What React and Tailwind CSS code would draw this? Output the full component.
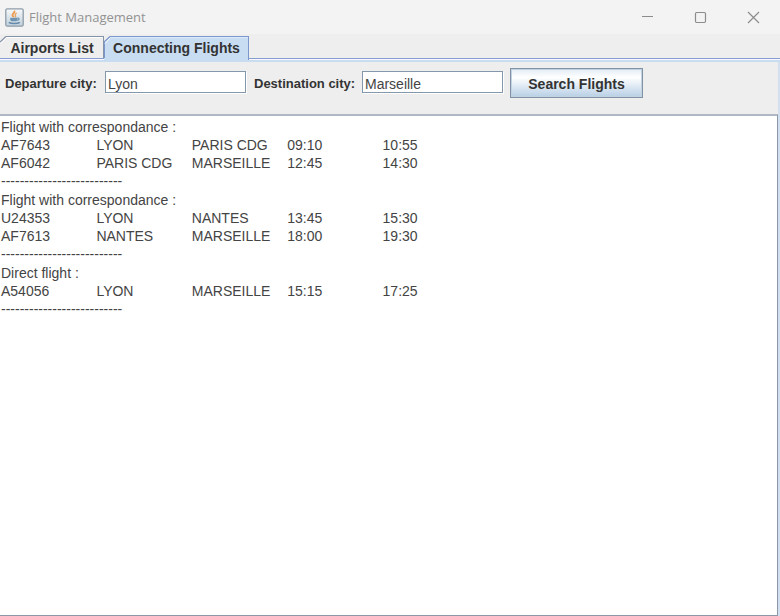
import { Fragment } from "react";

const groups = [
  {
    title: "Flight with correspondance :",
    rows: [
      ["AF7643", "LYON", "PARIS CDG", "09:10", "10:55"],
      ["AF6042", "PARIS CDG", "MARSEILLE", "12:45", "14:30"],
    ],
  },
  {
    title: "Flight with correspondance :",
    rows: [
      ["U24353", "LYON", "NANTES", "13:45", "15:30"],
      ["AF7613", "NANTES", "MARSEILLE", "18:00", "19:30"],
    ],
  },
  {
    title: "Direct flight :",
    rows: [["A54056", "LYON", "MARSEILLE", "15:15", "17:25"]],
  },
];

function JavaIcon() {
  return (
    <svg width="19" height="19" viewBox="0 0 19 19" aria-hidden="true">
      <defs>
        <linearGradient id="plate" x1="0" y1="0" x2="0" y2="1">
          <stop offset="0" stopColor="#f7f9fa" />
          <stop offset="1" stopColor="#bfd0dc" />
        </linearGradient>
      </defs>
      <rect x="0.8" y="0.8" width="17.4" height="17.4" rx="1.5" fill="url(#plate)" stroke="#8f9ca8" strokeWidth="1.3" />
      <path d="M9.2 2.800c1.600 2-2.800 3-1.700 4.700.4.700 1.200.9 1 1.700" fill="none" stroke="#f09a4a" strokeWidth="1.800" />
      <path d="M11.800 5c-1.800.9-2.200 1.700-1.300 2.600.5.600.1 1.200-.3 1.600" fill="none" stroke="#ee9f58" strokeWidth="1.300" />
      <path d="M5.200 9.800h7.300v1.400c0 1.500-1 2.100-2.200 2.100H7.400c-1.200 0-2.200-.6-2.200-2.100z" fill="#6f93b0" />
      <path d="M12.400 10.200c2.200-.5 2.400 1.700-.2 2.200" fill="none" stroke="#6f93b0" strokeWidth="1.200" />
      <path d="M3.800 14.300c2 1.500 9 1.500 11 0" fill="none" stroke="#6589a8" strokeWidth="1.500" />
    </svg>
  );
}

function TabShape({ active }) {
  return (
    <svg className="absolute inset-0 h-full w-full" aria-hidden="true">
      <g fill={active ? "#c8ddf2" : "#eeeeee"} stroke="none">
        <rect x="6" y="0" width="100%" height="100%" />
        <path d="M0 6L6 0V40H0z" />
      </g>
      <g fill="none" stroke={active ? "#7b97cc" : "#8494a8"}>
        <path d="M0 6L6 0.500" strokeWidth="1.200" />
        <line x1="6" y1="0.500" x2="100%" y2="0.500" />
        {active && <line x1="0.500" y1="6" x2="0.500" y2="22" />}
      </g>
      <path d="M1 7.500L6.500 1.500" fill="none" stroke="#ffffff" />
      <line x1="6.500" y1="1.500" x2="100%" y2="1.500" stroke={active ? "#dce9f7" : "#ffffff"} />
    </svg>
  );
}

const labelClass = "mt-2 text-[13px] leading-4 font-bold whitespace-nowrap";
const fieldClass =
  "mt-[3px] h-[22px] w-[141px] border border-[#8497ab] bg-white px-[2px] pt-1 text-sm leading-4 text-[#444444] shadow-[1px_1px_0_#ffffff] outline-none";

export default function App() {
  return (
    <div className="flex min-h-screen flex-col bg-[#eeeeee] font-['Liberation_Sans',Arial,sans-serif] text-sm text-[#333333]">
      <header className="flex h-[34px] items-center bg-[#f3f3f3] pl-[5px]">
        <JavaIcon />
        <h1 className="ml-[5px] flex-1 font-['Open_Sans','Noto_Sans',sans-serif] text-[13px] leading-5 text-[#929292]">
          Flight Management
        </h1>
        <div className="flex text-[#8c8c8c]">
          <button type="button" aria-label="Minimize" className="flex h-8 w-[53px] items-center justify-center">
            <svg width="13" height="13" viewBox="0 0 13 13" fill="none" stroke="currentColor">
              <path d="M1 5.500h11" />
            </svg>
          </button>
          <button type="button" aria-label="Maximize" className="flex h-8 w-[53px] items-center justify-center">
            <svg width="13" height="13" viewBox="0 0 13 13" fill="none" stroke="currentColor" strokeWidth="1.200">
              <rect x="1.500" y="1.500" width="10" height="10" rx="1.200" />
            </svg>
          </button>
          <button type="button" aria-label="Close" className="flex h-8 w-[53px] items-center justify-center">
            <svg width="13" height="13" viewBox="0 0 13 13" fill="none" stroke="currentColor" strokeWidth="1.200">
              <path d="M1 1l11 11M12 1L1 12" />
            </svg>
          </button>
        </div>
      </header>

      <div role="tablist" className="flex h-[25px] items-end border-b border-[#869cd2]">
        <button type="button" role="tab" aria-selected="false" className="relative h-[22px] w-[104px] border-r border-[#8494a8] pt-[2px] pl-px font-bold">
          <TabShape />
          <span className="relative">Airports List</span>
        </button>
        <button type="button" role="tab" aria-selected="true" className="relative -mb-[2px] h-6 w-[145px] border-r border-[#7b97cc] pl-px font-bold">
          <TabShape active />
          <span className="relative">Connecting Flights</span>
        </button>
      </div>
      <div className="h-[3px] border-t border-[#f6f8fb] bg-[#c8ddf2]" />

      <main className="flex flex-1 flex-col border-r-2 border-[#d3dfee]">
        <form className="flex h-[52px] items-start pt-[6px] pl-[5px]" onSubmit={(e) => e.preventDefault()}>
          <label htmlFor="departure" className={"w-[100px] " + labelClass}>
            Departure city:
          </label>
          <input id="departure" defaultValue="Lyon" className={fieldClass} />
          <label htmlFor="destination" className={"ml-2 w-[108px] " + labelClass}>
            Destination city:
          </label>
          <input id="destination" defaultValue="Marseille" className={fieldClass} />
          <button
            type="submit"
            className="ml-[7px] h-[30px] w-[133px] border border-[#7f92a6] bg-linear-to-b from-[#e2ecf5] via-white via-30% to-[#b8cfe5] pt-[2px] font-bold shadow-[inset_0_0_0_1px_#c3d2e0]"
          >
            Search Flights
          </button>
        </form>

        <section aria-label="Results" className="flex-1 border-t-2 border-r border-b border-t-[#b0b9c3] border-r-[#8a98a8] border-b-[#8a98a8] bg-white pt-[2px] pl-px text-[#444444]">
          <table className="w-[477px] table-fixed border-collapse text-left leading-[18px]">
            <tbody>
              {groups.map((group, i) => (
                <Fragment key={i}>
                  <tr>
                    <th colSpan={5} className="p-0 font-normal">{group.title}</th>
                  </tr>
                  {group.rows.map((row) => (
                    <tr key={row[0]}>
                      {row.map((cell, j) => (
                        <td key={j} className="p-0">{cell}</td>
                      ))}
                    </tr>
                  ))}
                  <tr>
                    <td colSpan={5} className="p-0 leading-[19px]">--------------------------</td>
                  </tr>
                </Fragment>
              ))}
            </tbody>
          </table>
        </section>
      </main>
    </div>
  );
}
